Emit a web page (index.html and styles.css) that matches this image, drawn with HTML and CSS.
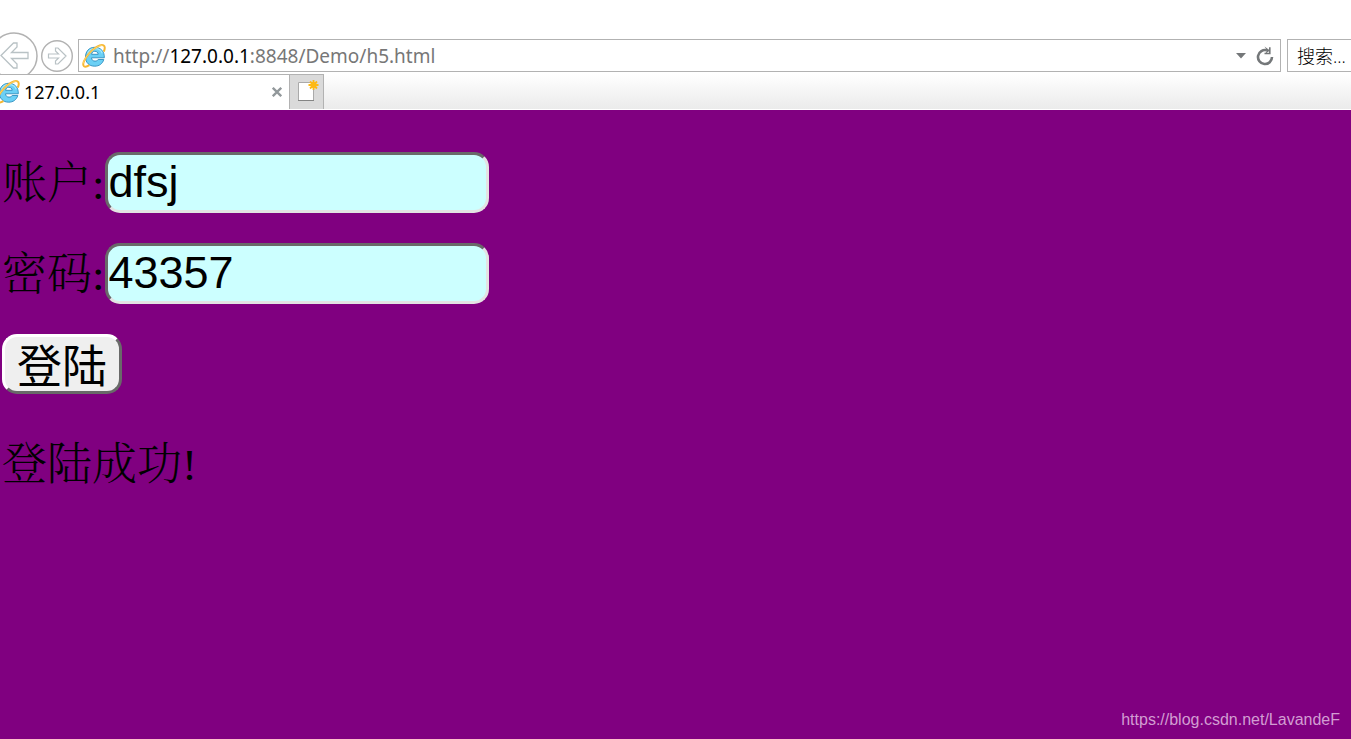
FILE: index.html
```html
<!DOCTYPE html>
<html lang="zh-CN">
<head>
<meta charset="utf-8">
<title>127.0.0.1</title>
<link rel="stylesheet" href="styles.css">
</head>
<body>
<svg class="defs" aria-hidden="true">
  <symbol id="ie" viewBox="0 0 24 24">
    <path d="M22.300 13.800H9.500c.2 2.200 1.500 3.300 3.500 3.300 1.600 0 2.600-.6 3.200-1.600h5.600c-1.200 4.200-4.600 6.700-9.100 6.700C7 22.200 3.500 18.500 3.500 13S7 3.300 12.700 3.300c6 0 9.900 4.200 9.600 10.500zM9.600 10.300h6.600c-.2-1.900-1.400-3-3.400-3-1.800 0-3 1.200-3.200 3z" fill="#6bd0f5" stroke="#2f8dbd" stroke-width=".9"/>
    <path d="M5.500 9.500C7 6 10 4.700 13 4.700c3.500 0 6.200 1.700 7.200 4.500" fill="none" stroke="#a5e9fc" stroke-width="1.200"/>
    <path d="M21.800 7.600c1.300-3.200 1.300-5.400-.3-6.200C18.400-.1 11.500 4.200 6.700 9.900c-4.500 5.300-6.700 10.700-4.700 12.300 1.200.9 3.200.3 5.400-1" fill="none" stroke="#f7b731" stroke-width="2"/>
    <path d="M20.500 1.300C16 1.500 10 6 6.100 10.500 3.400 13.700 1.600 17 1.300 19.500" fill="none" stroke="#ffe082" stroke-width=".7"/>
  </symbol>
</svg>
<header class="chrome">
  <div class="toolbar">
    <button class="nav back" aria-label="后退"><svg viewBox="0 0 48 48"><circle cx="24" cy="24" r="23" fill="#fff" stroke="#b2b2b2" stroke-width="1.500"/><path d="M11 23.500 23.500 11h3.500v4L21.500 20.500H38v6H21.500L27 32v4h-3.500z" fill="none" stroke="#b9c2c5" stroke-width="1.300"/></svg></button>
    <button class="nav forward" aria-label="前进"><svg viewBox="0 0 32 32"><circle cx="16" cy="16" r="15.300" fill="#fff" stroke="#b2b2b2" stroke-width="1.400"/><path d="M25 16 17 8h-2.500v3l3 3H7.500v4h10l-3 3v3H17z" fill="none" stroke="#b9c2c5" stroke-width="1.200"/></svg></button>
    <div class="address">
      <svg class="ie"><use href="#ie"/></svg>
      <a class="url" href="#">http://<span class="host">127.0.0.1</span>:8848/Demo/h5.html</a>
      <button class="tool" aria-label="历史"><svg width="10" height="6" viewBox="0 0 10 6"><path d="M0 0h10L5 5.500z" fill="#747779"/></svg></button>
      <button class="tool" aria-label="刷新"><svg width="18" height="20" viewBox="0 0 18 20"><path d="M11 4.300A7 7 0 1 0 16 11" fill="none" stroke="#747779" stroke-width="2.600"/><path d="M8.500 7.500h5.300V1.200" fill="none" stroke="#747779" stroke-width="1.600"/><path d="M8.500.5l5.500 4-5 3.500 2-3.500z" fill="#747779"/></svg></button>
    </div>
    <input class="search" type="text" aria-label="搜索" placeholder="搜索...">
  </div>
  <div class="tabs">
    <div class="tab">
      <svg class="ie"><use href="#ie"/></svg>
      <span class="tab-title">127.0.0.1</span>
      <button class="tool" aria-label="关闭标签页"><svg width="10" height="10" viewBox="0 0 10 10"><path d="M.8.8l8.400 8.400M9.200.8.800 9.200" stroke="#92989b" stroke-width="2.300"/></svg></button>
    </div>
    <button class="new-tab" aria-label="新建标签页"><svg width="22" height="24" viewBox="0 0 22 24"><path d="M1.500 4.500h15v18h-15z" fill="#fff" stroke="#aaa"/><path d="M1 22.500h16" stroke="#858585"/><path d="M16.500 2v10M11.500 7h10M13 3.500l7 7M20 3.500l-7 7" stroke="#fdb913" stroke-width="1.800"/><circle cx="16.500" cy="7" r="3" fill="#fdb913"/></svg></button>
  </div>
</header>
<main class="page">
  <form class="login">
    <div class="row"><label for="account">账户:</label><input class="field" id="account" type="text" value="dfsj"></div>
    <div class="row"><label for="password">密码:</label><input class="field" id="password" type="text" value="43357"></div>
    <button class="submit" type="button">登陆</button>
  </form>
  <p class="result">登陆成功!</p>
  <footer class="watermark">https://blog.csdn.net/LavandeF</footer>
</main>
</body>
</html>
```
FILE: styles.css
```css
* { box-sizing: border-box; }
body {
  margin: 0;
  min-height: 100vh;
  display: flex;
  flex-direction: column;
  background: purple;
  font-family: "Liberation Serif", "Noto Serif CJK SC", "Noto Sans CJK SC", serif;
  overflow-x: hidden;
}
button { padding: 0; border: 0; background: none; }
svg { display: block; }
.defs { position: absolute; width: 0; height: 0; }
.chrome {
  background: #fff;
  padding-top: 32px;
  font-family: "Noto Sans", "Noto Sans CJK SC", sans-serif;
}
.toolbar {
  display: flex;
  align-items: flex-start;
  height: 42px;
  overflow: hidden;
}
.nav { flex: none; }
.back { width: 48px; height: 48px; margin-left: -10px; }
.forward { width: 32px; height: 32px; margin: 8px 5px 0 3px; }
.address {
  flex: 1;
  display: flex;
  align-items: center;
  height: 33px;
  margin-top: 7px;
  padding: 0 6px 0 3px;
  border: 1px solid #b2b2b2;
}
.ie { flex: none; width: 24px; height: 24px; }
.url {
  flex: 1;
  margin-left: 7px;
  font-size: 19px;
  line-height: 24px;
  color: #777;
  text-decoration: none;
}
.host { color: #000; }
.tool { flex: none; }
.tool + .tool { margin-left: 10px; }
.search {
  flex: none;
  width: 70px;
  height: 33px;
  margin: 7px -6px 0 6px;
  padding: 0 0 0 9px;
  border: 1px solid #b2b2b2;
  border-radius: 0;
  font: 300 18px "Open Sans", "Noto Sans CJK SC", sans-serif;
}
.search::placeholder { color: #000; opacity: 1; }
.tabs {
  display: flex;
  height: 36px;
  border-bottom: 1px solid #fff;
  background: linear-gradient(#fff, #ebebeb);
}
.tab {
  display: flex;
  align-items: center;
  width: 289px;
  padding-right: 7px;
  border-top: 1px solid #b2b2b2;
  background: #fff;
}
.tab .ie { margin-left: -4px; }
.tab-title {
  flex: 1;
  margin-left: 4px;
  font-size: 18px;
}
.new-tab {
  display: flex;
  align-items: center;
  width: 35px;
  padding: 0 0 4px 7px;
  border: 1px solid #b2b2b2;
  border-bottom: 0;
  background: #dadada;
}
.page {
  flex: 1;
  display: flex;
  flex-direction: column;
  padding: 42px 2px 0;
}
.login { display: flex; flex-direction: column; align-items: flex-start; gap: 30px; }
.row { display: flex; align-items: center; font-size: 45px; font-weight: 300; }
.row label { padding-top: 4px; line-height: 57px; }
.field {
  width: 384px;
  height: 61px;
  padding: 0 2px 2px 1px;
  border: 3px solid;
  border-color: #696969 #e3e3e3 #e3e3e3 #696969;
  border-radius: 15px;
  background: #cff;
  font: 45px "Liberation Sans", sans-serif;
  color: #000;
}
.submit {
  width: 120px;
  height: 60px;
  border: 3px solid;
  border-color: #fff #696969 #696969 #fff;
  border-radius: 15px;
  background: #efefef;
  font: 45px/54px "Noto Sans CJK SC", sans-serif;
  color: #000;
}
.result { margin: 41px 0 0; font-size: 45px; line-height: 61px; font-weight: 300; }
.watermark {
  margin: auto 9px 10px;
  text-align: right;
  font: 16px/18px "Liberation Sans", sans-serif;
  color: #d29dd2;
}
```
